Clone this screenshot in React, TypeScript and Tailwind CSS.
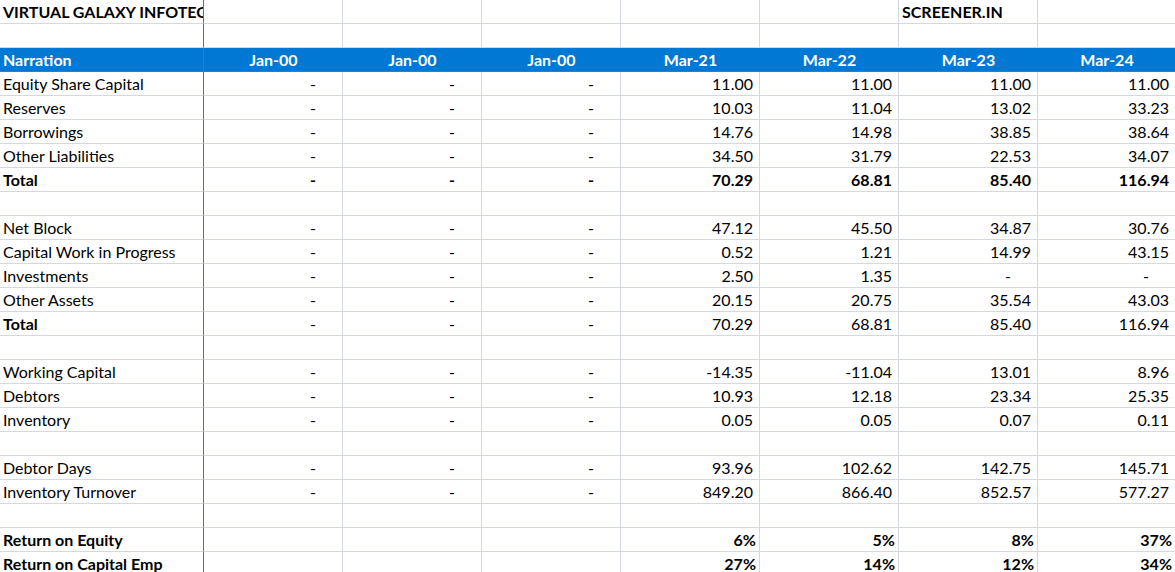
import React from "react";

type Row = { label: string; vals: (string | null)[]; boldAll?: boolean; boldLabel?: boolean; pct?: boolean };
const D = "-";
const J = [D, D, D];
const rows: (Row | null)[] = [
  { label: "Equity Share Capital", vals: [...J, "11.00", "11.00", "11.00", "11.00"] },
  { label: "Reserves", vals: [...J, "10.03", "11.04", "13.02", "33.23"] },
  { label: "Borrowings", vals: [...J, "14.76", "14.98", "38.85", "38.64"] },
  { label: "Other Liabilities", vals: [...J, "34.50", "31.79", "22.53", "34.07"] },
  { label: "Total", vals: [...J, "70.29", "68.81", "85.40", "116.94"], boldAll: true },
  null,
  { label: "Net Block", vals: [...J, "47.12", "45.50", "34.87", "30.76"] },
  { label: "Capital Work in Progress", vals: [...J, "0.52", "1.21", "14.99", "43.15"] },
  { label: "Investments", vals: [...J, "2.50", "1.35", D, D] },
  { label: "Other Assets", vals: [...J, "20.15", "20.75", "35.54", "43.03"] },
  { label: "Total", vals: [...J, "70.29", "68.81", "85.40", "116.94"], boldLabel: true },
  null,
  { label: "Working Capital", vals: [...J, "-14.35", "-11.04", "13.01", "8.96"] },
  { label: "Debtors", vals: [...J, "10.93", "12.18", "23.34", "25.35"] },
  { label: "Inventory", vals: [...J, "0.05", "0.05", "0.07", "0.11"] },
  null,
  { label: "Debtor Days", vals: [...J, "93.96", "102.62", "142.75", "145.71"] },
  { label: "Inventory Turnover", vals: [...J, "849.20", "866.40", "852.57", "577.27"] },
  null,
  { label: "Return on Equity", vals: [null, null, null, "6%", "5%", "8%", "37%"], boldAll: true, pct: true },
  { label: "Return on Capital Emp", vals: [null, null, null, "27%", "14%", "12%", "34%"], boldAll: true, pct: true },
];
const heads = ["Jan-00", "Jan-00", "Jan-00", "Mar-21", "Mar-22", "Mar-23", "Mar-24"];

const cell = "h-[24px] border-b border-r border-[#d4d8e4] flex items-center overflow-hidden whitespace-nowrap";
const first = "h-[24px] border-b border-r border-r-[#6e6e6e] border-b-[#d4d8e4] flex items-center pl-[3px] overflow-hidden whitespace-nowrap";

export default function App() {
  return (
    <div className="w-[1175px] h-[572px] overflow-hidden bg-white text-[16px] text-black" style={{ fontFamily: "Lato, 'Liberation Sans', sans-serif" }}>
      <div className="grid grid-cols-[204px_139px_139px_139px_139px_139px_139px_138px]">
        <div className={first + " h-[22px] font-bold"}>VIRTUAL GALAXY INFOTECH</div>
        {[0, 1, 2, 3, 4, 5, 6].map((i) => (
          <div key={i} className={cell + " h-[22px] pl-[3px] font-bold"}>{i === 5 ? "SCREENER.IN" : ""}</div>
        ))}
        <div className={first}></div>
        {[0, 1, 2, 3, 4, 5, 6].map((i) => <div key={i} className={cell}></div>)}
        <div className="h-[24px] bg-[#0078d4] text-white font-bold flex items-center pl-[3px] border-b border-b-[#6e6e6e] border-r border-r-[#6e6e6e]">Narration</div>
        {heads.map((h, i) => (
          <div key={i} className="h-[24px] bg-[#0078d4] text-white font-bold flex items-center justify-center border-b border-b-[#6e6e6e]">{h}</div>
        ))}
        {rows.map((r, ri) =>
          r === null ? (
            <React.Fragment key={ri}>
              <div className={first}></div>
              {[0, 1, 2, 3, 4, 5, 6].map((i) => <div key={i} className={cell}></div>)}
            </React.Fragment>
          ) : (
            <React.Fragment key={ri}>
              <div className={first + (r.boldAll || r.boldLabel ? " font-bold" : "")}>{r.label}</div>
              {r.vals.map((v, i) => (
                <div key={i} className={cell + " justify-end " + (v === D ? "pr-[26px]" : r.pct ? "pr-[3px]" : "pr-[6px]") + (r.boldAll ? " font-bold" : "")}>
                  {v ?? ""}
                </div>
              ))}
            </React.Fragment>
          )
        )}
      </div>
    </div>
  );
}
